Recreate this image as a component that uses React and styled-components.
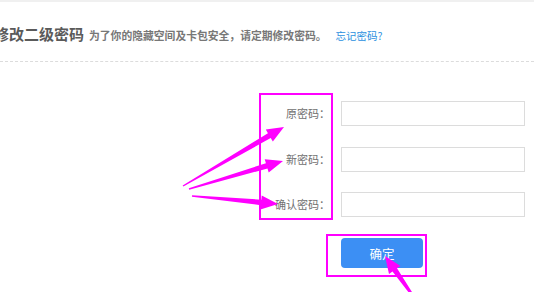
import styled, { createGlobalStyle } from 'styled-components';

const GlobalStyle = createGlobalStyle`
  html, body {
    margin: 0;
    padding: 0;
    background: #fff;
  }
  body {
    font-family: "Noto Sans CJK SC", "Liberation Sans", sans-serif;
    overflow: hidden;
  }
`;

const Page = styled.div`
  position: relative;
  width: 534px;
  height: 292px;
  border-top: 2px solid #f0f0f0;
  box-sizing: border-box;
  overflow: hidden;
`;

const Header = styled.div`
  display: flex;
  align-items: baseline;
  height: 60px;
  padding-top: 22px;
  box-sizing: border-box;
  border-bottom: 1px dashed #dcdcdc;
  white-space: nowrap;
`;

const Title = styled.span`
  margin-left: -6px;
  font-size: 15px;
  line-height: 20px;
  font-weight: bold;
  color: #5a5a5a;
`;

const Hint = styled.span`
  margin-left: 5px;
  font-size: 10.8px;
  font-weight: bold;
  color: #777;
`;

const Link = styled.a`
  margin-left: 9px;
  font-size: 10.5px;
  color: #2b90e0;
  text-decoration: none;
`;

const Form = styled.div`
  display: flex;
  align-items: flex-start;
  margin: 31px 0 0 259px;
`;

const LabelBox = styled.div`
  width: 74px;
  box-sizing: border-box;
  border: 2px solid #f0f;
  padding: 6px 1px 1px 0;
  display: flex;
  flex-direction: column;
  gap: 20.5px;
`;

const Label = styled.div`
  height: 25px;
  line-height: 25px;
  text-align: right;
  font-size: 11px;
  color: #707070;
`;

const Fields = styled.div`
  margin: 8px 0 0 8px;
  display: flex;
  flex-direction: column;
  gap: 20.5px;
`;

const Input = styled.input`
  width: 184px;
  height: 25px;
  box-sizing: border-box;
  border: 1px solid #dcdcdc;
  outline: none;
  padding: 0 6px;
  margin: 0;
`;

const ButtonBox = styled.div`
  width: 101px;
  box-sizing: border-box;
  border: 2px solid #f0f;
  padding: 2px 2px 7px 13px;
  margin: 14px 0 0 326px;
`;

const Submit = styled.button`
  display: block;
  width: 82px;
  height: 30px;
  border: none;
  border-radius: 4px;
  background: #3c8ff4;
  color: #fff;
  font-family: inherit;
  font-size: 12.5px;
  padding: 0;
`;

const Overlay = styled.svg`
  position: absolute;
  left: 0;
  top: -2px;
  pointer-events: none;
`;

function arrow(t, p, headLen = 17, headW = 7, shaftW = 5.5) {
  const dx = p[0] - t[0];
  const dy = p[1] - t[1];
  const len = Math.hypot(dx, dy);
  const ux = dx / len;
  const uy = dy / len;
  const nx = -uy;
  const ny = ux;
  const bx = p[0] - ux * headLen;
  const by = p[1] - uy * headLen;
  const pts = [
    [t[0] + nx * 0.7, t[1] + ny * 0.7],
    [bx + (nx * shaftW) / 2, by + (ny * shaftW) / 2],
    [bx + nx * headW, by + ny * headW],
    p,
    [bx - nx * headW, by - ny * headW],
    [bx - (nx * shaftW) / 2, by - (ny * shaftW) / 2],
    [t[0] - nx * 0.7, t[1] - ny * 0.7],
  ];
  return pts.map((q) => q.join(',')).join(' ');
}

const arrows = [
  [[183, 186], [284, 127]],
  [[189, 189], [283, 161]],
  [[192, 196], [278, 204]],
  [[420, 306], [385, 256]],
];

const App = () => {
  return (
    <Page>
      <GlobalStyle />
      <Header>
        <Title>修改二级密码</Title>
        <Hint>为了你的隐藏空间及卡包安全，请定期修改密码。</Hint>
        <Link href="#">忘记密码?</Link>
      </Header>
      <Form>
        <LabelBox>
          <Label>原密码：</Label>
          <Label>新密码：</Label>
          <Label>确认密码：</Label>
        </LabelBox>
        <Fields>
          <Input type="password" />
          <Input type="password" />
          <Input type="password" />
        </Fields>
      </Form>
      <ButtonBox>
        <Submit>确定</Submit>
      </ButtonBox>
      <Overlay width="534" height="292" viewBox="0 0 534 292">
        {arrows.map(([t, p], i) => (
          <polygon key={i} points={arrow(t, p)} fill="#f0f" />
        ))}
      </Overlay>
    </Page>
  );
};

export default App;
